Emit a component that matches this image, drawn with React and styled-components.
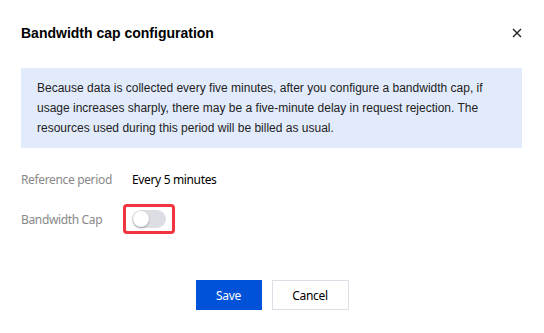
import React from 'react';
import styled, { createGlobalStyle } from 'styled-components';

const GlobalStyle = createGlobalStyle`
    html, body {
        margin: 0;
        padding: 0;
        background: #ffffff;
    }
`;

const Dialog = styled.div`
    width: 544px;
    height: 333px;
    box-sizing: border-box;
    padding: 22px 22px 0 21px;
    display: flex;
    flex-direction: column;
    background: #fff;
`;

const Header = styled.div`
    display: flex;
    align-items: center;
    justify-content: space-between;
    height: 22px;
`;

const Title = styled.div`
    font-family: "Liberation Sans", Arial, sans-serif;
    font-size: 14px;
    font-weight: bold;
    color: #000;
`;

const CloseButton = styled.button`
    border: none;
    background: none;
    padding: 0;
    width: 14px;
    height: 14px;
    display: flex;
    align-items: center;
    justify-content: center;
    margin-right: -2px;
    cursor: pointer;
`;

const Alert = styled.div`
    margin-top: 24px;
    background: #e2ebfc;
    padding: 10px 16px;
    font-family: "Liberation Sans", Arial, sans-serif;
    font-size: 12px;
    line-height: 20px;
    color: #222;
`;

const Form = styled.div`
    margin-top: 21px;
    display: flex;
    flex-direction: column;
    gap: 15px;
`;

const Row = styled.div`
    display: flex;
    align-items: center;
    height: ${(p) => p.height || '20px'};
`;

const Label = styled.div`
    width: 111px;
    font-family: "Noto Sans", "Open Sans", sans-serif;
    font-size: 12px;
    letter-spacing: -0.35px;
    color: #888;
`;

const Value = styled.div`
    font-family: "Noto Sans", "Open Sans", sans-serif;
    font-size: 12px;
    letter-spacing: -0.35px;
    color: #000;
`;

const Highlight = styled.div`
    margin-left: -9px;
    width: 52px;
    height: 30px;
    box-sizing: border-box;
    border: 3px solid #f0353f;
    border-radius: 4px;
    display: flex;
    align-items: center;
    justify-content: center;
`;

const Track = styled.div`
    width: 34px;
    height: 18px;
    border-radius: 9px;
    background: #dcdee3;
    display: flex;
    align-items: center;
    padding: 0 1px;
    box-sizing: border-box;
    justify-content: ${(p) => (p.on ? 'flex-end' : 'flex-start')};
`;

const Knob = styled.div`
    width: 16px;
    height: 16px;
    border-radius: 50%;
    background: #fff;
    box-shadow: 0 1px 2px rgba(0, 0, 0, 0.35);
`;

const Footer = styled.div`
    margin-top: auto;
    margin-bottom: 23px;
    display: flex;
    justify-content: center;
    gap: 10px;
    padding-left: 1px;
`;

const Button = styled.button`
    height: 30px;
    min-width: ${(p) => p.width};
    box-sizing: border-box;
    font-family: "Noto Sans", "Open Sans", sans-serif;
    font-size: 12px;
    letter-spacing: -0.3px;
    border: 1px solid ${(p) => (p.primary ? '#0052d9' : '#dcdfe6')};
    background: ${(p) => (p.primary ? '#0052d9' : '#fff')};
    color: ${(p) => (p.primary ? '#fff' : '#000')};
    cursor: pointer;
`;

const CloseIcon = () => (
    <svg width="10" height="10" viewBox="0 0 10 10">
        <path d="M1 1 L9 9 M9 1 L1 9" stroke="#222" strokeWidth="1.4" fill="none" />
    </svg>
);

export default function App() {
    return (
        <>
            <GlobalStyle />
            <Dialog>
                <Header>
                    <Title>Bandwidth cap configuration</Title>
                    <CloseButton aria-label="close">
                        <CloseIcon />
                    </CloseButton>
                </Header>
                <Alert>
                    Because data is collected every five minutes, after you configure a bandwidth cap, if usage increases
                    sharply, there may be a five-minute delay in request rejection. The resources used during this period
                    will be billed as usual.
                </Alert>
                <Form>
                    <Row>
                        <Label>Reference period</Label>
                        <Value>Every 5 minutes</Value>
                    </Row>
                    <Row height="30px">
                        <Label>Bandwidth Cap</Label>
                        <Highlight>
                            <Track>
                                <Knob />
                            </Track>
                        </Highlight>
                    </Row>
                </Form>
                <Footer>
                    <Button primary width="66px">Save</Button>
                    <Button width="77px">Cancel</Button>
                </Footer>
            </Dialog>
        </>
    );
}
